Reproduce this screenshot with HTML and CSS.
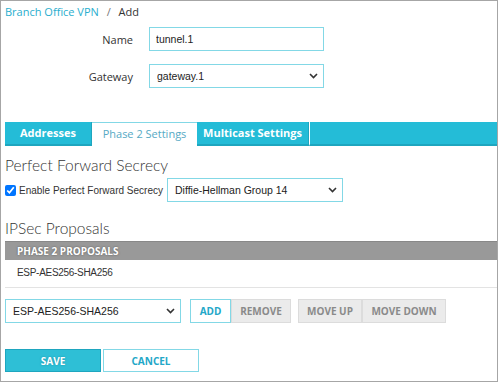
FILE: index.html
```html
<!DOCTYPE html>
<html lang="en">
<head>
    <meta charset="UTF-8">
    <title>Branch Office VPN - Add</title>
    <link rel="stylesheet" href="styles.css">
</head>
<body>
    <div class="frame">
        <!-- Breadcrumb -->
        <div class="crumb">
            <a href="#">Branch Office VPN</a>
            <span class="sep">/</span>
            <span>Add</span>
        </div>

        <!-- Name / Gateway -->
        <div class="field">
            <label for="name">Name</label>
            <input type="text" id="name" value="tunnel.1">
        </div>
        <div class="field">
            <label for="gateway">Gateway</label>
            <span class="select-wrap wide">
                <select id="gateway"><option>gateway.1</option></select>
                <svg class="chev" width="9" height="6" viewBox="0 0 9 6"><path d="M1 1l3.5 3.5L8 1" fill="none" stroke="#333" stroke-width="1.6"/></svg>
            </span>
        </div>

        <!-- Tabs -->
        <div class="tabs">
            <div class="tab tab-addr">Addresses</div>
            <div class="tab tab-phase active">Phase 2 Settings</div>
            <div class="tab tab-multi">Multicast Settings</div>
            <div class="tab-rest"></div>
        </div>

        <h2>Perfect Forward Secrecy</h2>
        <div class="pfs">
            <label class="check"><input type="checkbox" checked> Enable Perfect Forward Secrecy</label>
            <span class="select-wrap dh">
                <select><option>Diffie-Hellman Group 14</option></select>
                <svg class="chev" width="9" height="6" viewBox="0 0 9 6"><path d="M1 1l3.5 3.5L8 1" fill="none" stroke="#333" stroke-width="1.6"/></svg>
            </span>
        </div>

        <h2 class="ipsec">IPSec Proposals</h2>
        <div class="grid-head">PHASE 2 PROPOSALS</div>
        <div class="grid-row">ESP-AES256-SHA256</div>

        <!-- Proposal controls -->
        <div class="controls">
            <span class="select-wrap prop">
                <select><option>ESP-AES256-SHA256</option></select>
                <svg class="chev" width="9" height="6" viewBox="0 0 9 6"><path d="M1 1l3.5 3.5L8 1" fill="none" stroke="#333" stroke-width="1.6"/></svg>
            </span>
            <div class="btn-group">
                <button class="btn btn-add">ADD</button>
                <button class="btn btn-gray btn-remove">REMOVE</button>
            </div>
            <div class="btn-group">
                <button class="btn btn-gray btn-up">MOVE UP</button>
                <button class="btn btn-gray btn-down">MOVE DOWN</button>
            </div>
        </div>

        <div class="actions">
            <button class="btn btn-save">SAVE</button>
            <button class="btn btn-cancel">CANCEL</button>
        </div>
    </div>
</body>
</html>
```

FILE: styles.css
```css
html, body {
    margin: 0;
    background: #fff;
}
body {
    font-family: "Open Sans", sans-serif;
    font-size: 11px;
    color: #333;
}
.frame {
    box-sizing: border-box;
    height: 382px;
    border: 1px solid #a6a6a6;
    padding-left: 4px;
}
.crumb {
    height: 24px;
    line-height: 22px;
    font-size: 11px;
}
.crumb a {
    color: #29aece;
    text-decoration: none;
}
.crumb .sep {
    color: #777;
    margin: 0 5px;
}
.field {
    display: flex;
    align-items: center;
    margin-top: 2px;
    margin-bottom: 13px;
}
.field label {
    width: 128px;
    text-align: right;
    margin-right: 16px;
    font-size: 11px;
    color: #333;
}
input[type=text], select {
    box-sizing: border-box;
    height: 24px;
    border: 1px solid #83d8e6;
    border-radius: 0;
    background: #fff;
    font-family: "Liberation Sans", sans-serif;
    font-size: 10.5px;
    color: #222;
    outline: none;
}
input[type=text] {
    width: 175px;
    padding: 0 6px;
}
.select-wrap {
    position: relative;
    display: inline-block;
}
select {
    appearance: none;
    -webkit-appearance: none;
    width: 100%;
    padding: 0 20px 0 7px;
}
.select-wrap .chev {
    position: absolute;
    right: 6px;
    top: 9px;
    pointer-events: none;
}
.select-wrap.wide { width: 175px; }
.select-wrap.dh { width: 176px; }
.select-wrap.prop { width: 176px; }

/* Tabs */
.tabs {
    display: flex;
    margin-top: 34px;
    height: 24px;
}
.tab {
    box-sizing: border-box;
    height: 24px;
    line-height: 22px;
    text-align: center;
    background: #24bcd7;
    color: #fff;
    font-weight: bold;
    font-size: 11px;
    border-bottom: 2px solid #1ea6bf;
    border-right: 1px solid #1ea6bf;
}
.tab.active {
    background: #fff;
    color: #56a9c4;
    font-weight: normal;
    border-top: 1px solid #83d8e6;
    border-bottom: none;
    border-right: none;
}
.tab-addr { width: 87px; }
.tab-phase { width: 105px; }
.tab-multi { width: 112px; }
.tab-rest {
    flex: 1;
    background: #24bcd7;
    border-bottom: 2px solid #1ea6bf;
    border-left: 1px solid #fff;
    box-sizing: border-box;
}

h2 {
    font-family: "Lato", sans-serif;
    font-weight: 300;
    font-size: 15.5px;
    color: #333;
    margin: 9px 0 0 0;
    line-height: 20px;
}
.pfs {
    display: flex;
    align-items: center;
    margin-top: 3px;
}
.check {
    display: flex;
    align-items: center;
    flex: 0 0 162px;
    white-space: nowrap;
    font-family: "Liberation Sans", sans-serif;
    font-size: 10px;
}
.check input {
    margin: 0 3px 0 0;
    width: 11px;
    height: 11px;
}
h2.ipsec {
    margin-top: 16px;
}
.grid-head {
    margin-top: 3px;
    height: 18px;
    line-height: 18px;
    background: #999;
    color: #fff;
    font-weight: bold;
    font-size: 10px;
    padding-left: 12px;
    text-shadow: 0 0 2px #555;
    border-top: 1px solid #888;
}
.grid-row {
    height: 27px;
    line-height: 26px;
    padding-left: 12px;
    font-family: "Liberation Sans", sans-serif;
    font-size: 10px;
    letter-spacing: -0.3px;
    border-bottom: 1px solid #e3e3e3;
}
.controls {
    display: flex;
    align-items: center;
    margin-top: 11px;
}
.btn-group {
    display: flex;
    margin-left: 9px;
}
.btn-group + .btn-group {
    margin-left: 7px;
}
.btn {
    box-sizing: border-box;
    height: 24px;
    padding: 0;
    font-family: "Open Sans", sans-serif;
    font-weight: bold;
    font-size: 10px;
    border-radius: 0;
    cursor: pointer;
}
.btn-add {
    width: 41px;
    background: #fff;
    color: #23a7c8;
    border: 1px solid #83d8e6;
}
.btn-gray {
    background: #ebebeb;
    color: #8a8a8a;
    border: 1px solid #dcdcdc;
}
.btn-remove { width: 60px; }
.btn-up { width: 64px; }
.btn-down { width: 84px; }
.actions {
    display: flex;
    gap: 2px;
    margin-top: 26px;
}
.btn-save {
    width: 96px;
    height: 23px;
    background: #2ebfd6;
    color: #fff;
    border: 1px solid #1ea6bf;
    text-shadow: 0 0 2px #1a8ea6;
}
.btn-cancel {
    width: 96px;
    height: 23px;
    background: #fff;
    color: #23a7c8;
    border: 1px solid #83d8e6;
}
```
